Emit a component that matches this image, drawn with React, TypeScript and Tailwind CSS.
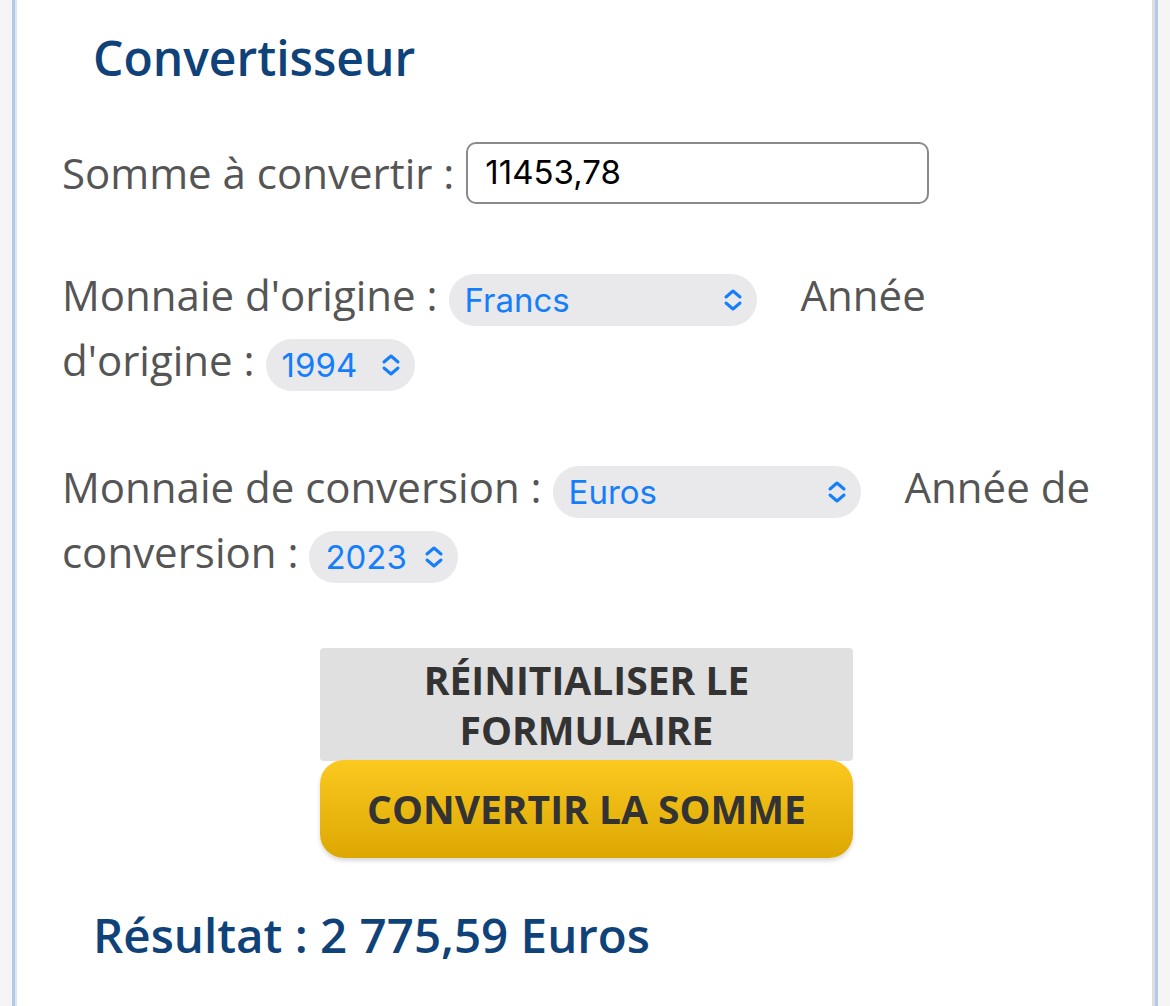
import React from "react";

function Chevrons() {
  return (
    <svg viewBox="0 0 22 24" className="w-[22px] h-[24px]" fill="none" stroke="#147efb" strokeWidth={3} strokeLinecap="round" strokeLinejoin="round">
      <path d="M4 9 L11 3 L18 9" />
      <path d="M4 15 L11 21 L18 15" />
    </svg>
  );
}

function Select({ value, width }: { value: string; width: string }) {
  return (
    <span
      className={`inline-flex items-center justify-between h-[52px] rounded-full bg-[#e9e9eb] pl-[16px] pr-[13px] align-middle text-[33px] text-[#147efb] ${width}`}
      style={{ fontFamily: "Inter, 'Noto Sans', sans-serif" }}
    >
      <span>{value}</span>
      <Chevrons />
    </span>
  );
}

export default function App() {
  return (
    <div className="min-h-screen bg-[#f5f5f5] px-[12px]" style={{ fontFamily: "'Open Sans', sans-serif" }}>
      <div className="min-h-[1006px] border-x-[3px] border-[#b3c9ea] bg-white">
        <div className="min-h-[1006px] border-l-2 border-r-[3px] border-l-[#dfe5ef] border-r-[#dedede] pl-[45px] pr-[50px] pt-[27px]">
          <h2 className="pl-[31px] text-[48px] font-semibold leading-[1.3] text-[#0f4279]">Convertisseur</h2>

          <div className="mt-[51px] flex items-center text-[42px] leading-[65px] text-[#555555]">
            <span>Somme à convertir&nbsp;:</span>
            <input
              defaultValue="11453,78"
              className="ml-[12px] h-[62px] w-[463px] rounded-[10px] border-2 border-[#8a8a8a] px-[17px] text-[33px] text-black outline-none"
              style={{ fontFamily: "Inter, 'Noto Sans', sans-serif" }}
            />
          </div>

          <p className="mt-[57px] text-[42px] leading-[65px] text-[#555555]">
            Monnaie d'origine&nbsp;: <Select value="Francs" width="w-[308px]" />
            <span className="ml-[44px]">Année d'origine&nbsp;:</span> <Select value="1994" width="w-[149px]" />
          </p>

          <p className="mt-[62px] text-[42px] leading-[65px] text-[#555555]">
            Monnaie de conversion&nbsp;: <Select value="Euros" width="w-[308px]" />
            <span className="ml-[44px]">Année de conversion&nbsp;:</span> <Select value="2023" width="w-[149px]" />
          </p>

          <div className="mt-[64px] flex flex-col items-center pl-[9px]">
            <button className="w-[533px] h-[113px] rounded-[4px] bg-[#e0e0e0] text-[39px] font-bold leading-[50px] text-[#333333] uppercase">
              Réinitialiser le
              <br />
              formulaire
            </button>
            <button className="w-[533px] h-[98px] -mt-px rounded-[24px] bg-gradient-to-b from-[#fbc91f] to-[#dca700] text-[39px] font-bold text-[#333333] uppercase shadow-[0_3px_4px_rgba(0,0,0,0.15)]">
              Convertir la somme
            </button>
          </div>

          <p className="mt-[46px] pl-[31px] text-[47.5px] font-semibold leading-[1.3] text-[#0f4279]">
            Résultat : 2 775,59 Euros
          </p>
        </div>
      </div>
    </div>
  );
}
